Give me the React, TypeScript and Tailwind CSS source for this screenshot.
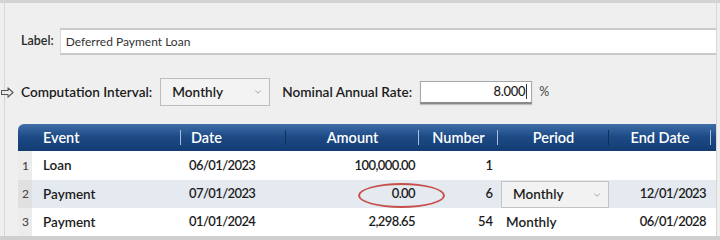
import { ChevronDown } from "lucide-react";

const COLS = [
  { id: "event", label: "Event", w: "w-[149px]", head: "justify-start pl-[11px]", divider: "light" },
  { id: "date", label: "Date", w: "w-[105px]", head: "justify-start pl-[10px]", divider: "dark" },
  { id: "amount", label: "Amount", w: "w-[133px]", head: "justify-center", divider: "light" },
  { id: "number", label: "Number", w: "w-[79px]", head: "justify-center", divider: "light" },
  { id: "period", label: "Period", w: "w-[111px]", head: "justify-center", divider: "dark" },
  { id: "end", label: "End Date", w: "w-[102px]", head: "justify-center", divider: "light" },
];

const ROWS = [
  { n: 1, event: "Loan", date: "06/01/2023", amount: "100,000.00", number: "1", period: "", end: "" },
  { n: 2, event: "Payment", date: "07/01/2023", amount: "0.00", number: "6", period: "Monthly", end: "12/01/2023" },
  { n: 3, event: "Payment", date: "01/01/2024", amount: "2,298.65", number: "54", period: "Monthly", end: "06/01/2028" },
];

function OutlineArrow() {
  return (
    <svg width="13" height="11" viewBox="0 0 13 11" fill="none" stroke="#555" strokeWidth="1.1">
      <path d="M0.5 3.5 H7 V0.8 L12 5.5 L7 10.2 V7.5 H0.5 Z" strokeLinejoin="round" />
    </svg>
  );
}

export default function App() {
  return (
    <div className="w-[720px] h-[240px] overflow-hidden bg-[#efefef] flex flex-col text-[#1c1c1c]" style={{ fontFamily: "Lato, 'Open Sans', sans-serif" }}>
      <div className="h-[3px] bg-[#d3d3d3] shrink-0" />
      <div className="flex-1 flex flex-col ml-[4px] mr-[3px] border-l border-r border-[#d6d6d6]">
        {/* label row */}
        <div className="mt-[25px] flex items-center h-[27px]">
          <span className="ml-[16px] text-[12.5px] font-semibold text-[#2a2a2a]">Label:</span>
          <div className="ml-[6px] flex-1 h-[27px] bg-white border-t-2 border-b-2 border-[#c9c9c9] border-l border-l-[#d9d9d9] flex items-center pl-[5px] text-[12px] text-[#333]">
            Deferred Payment Loan
          </div>
        </div>

        {/* interval row */}
        <div className="mt-[23px] flex items-center h-[28px] -ml-[4px]">
          <OutlineArrow />
          <span className="ml-[7px] text-[13.6px] font-semibold">Computation Interval:</span>
          <div className="ml-[8px] w-[110px] h-[28px] bg-[#f3f3f3] border border-[#bdbdbd] flex items-center justify-between pl-[11px] pr-[6px]">
            <span className="text-[13.6px] font-semibold">Monthly</span>
            <ChevronDown size={10} strokeWidth={1.5} color="#777" />
          </div>
          <span className="ml-[12px] text-[13.6px] font-semibold">Nominal Annual Rate:</span>
          <div className="ml-[8px] w-[112px] h-[23px] bg-white border border-[#a8a8a8] border-b-2 border-b-[#8a8a8a] flex items-center justify-end pr-[4px] shadow-[0_1px_1px_rgba(0,0,0,0.2)]">
            <span className="text-[13px] font-medium tracking-[-0.3px]">8.000</span>
            <span className="ml-[1px] w-px h-[15px] bg-[#333]" />
          </div>
          <span className="ml-[7px] text-[12.5px] text-[#444]">%</span>
        </div>

        {/* table */}
        <div className="mt-[18px] ml-[13px] flex flex-col">
          <div className="flex h-[27px] rounded-tl-[6px] overflow-hidden bg-gradient-to-b from-[#3f6ea8] via-[#1c4984] to-[#143c73] text-white text-[14.5px] font-semibold">
            <div className="w-[14px]" />
            {COLS.map((c) => (
              <div key={c.id} className={`${c.w} flex items-center ${c.head} relative`}>
                {c.label}
                <span
                  className={`absolute right-0 top-[6px] h-[15px] w-px ${c.divider === "light" ? "bg-[#a8bfdc]" : "bg-[#0f2f5c]"}`}
                />
              </div>
            ))}
            <div className="flex-1" />
          </div>
          {ROWS.map((r) => {
            const alt = r.n === 2;
            return (
              <div key={r.n} className={`flex text-[13.5px] font-semibold ${r.n === 1 ? "h-[29px]" : "h-[28px]"}`}>
                <div className={`w-[14px] flex items-center pl-[4px] text-[12px] font-medium text-[#444] ${alt ? "bg-[#e0e0e0]" : "bg-[#ececec]"}`}>
                  {r.n}
                </div>
                <div className={`flex-1 flex ${alt ? "bg-[#e5eaf1]" : "bg-white"}`}>
                  <div className="w-[149px] flex items-center pl-[11px]">{r.event}</div>
                  <div className="w-[105px] flex items-center pl-[8px] text-[13px] tracking-[-0.6px]">{r.date}</div>
                  <div className="w-[133px] flex items-center justify-end pr-[4px] relative text-[13px] tracking-[-0.6px]">
                    {r.amount}
                    {alt && (
                      <span className="absolute left-[72px] top-[3px] w-[87px] h-[25px] rounded-[50%] border-2 border-[#c8504a]" />
                    )}
                  </div>
                  <div className="w-[79px] flex items-center justify-end pr-[5px] text-[13px]">{r.number}</div>
                  <div className="w-[111px] flex items-center">
                    {alt ? (
                      <div className="ml-[3px] w-[108px] h-[27px] mt-[1px] bg-[#f2f2f2] border border-[#c4c4c4] flex items-center justify-between pl-[11px] pr-[6px]">
                        <span>Monthly</span>
                        <ChevronDown size={10} strokeWidth={1.5} color="#777" />
                      </div>
                    ) : (
                      <span className="pl-[8px]">{r.period}</span>
                    )}
                  </div>
                  <div className="w-[102px] flex items-center justify-end pr-[5px] text-[13px] tracking-[-0.6px]">{r.end}</div>
                </div>
              </div>
            );
          })}
        </div>
      </div>
      <div className="h-[4px] bg-[#cfcfcf] shrink-0" />
    </div>
  );
}
